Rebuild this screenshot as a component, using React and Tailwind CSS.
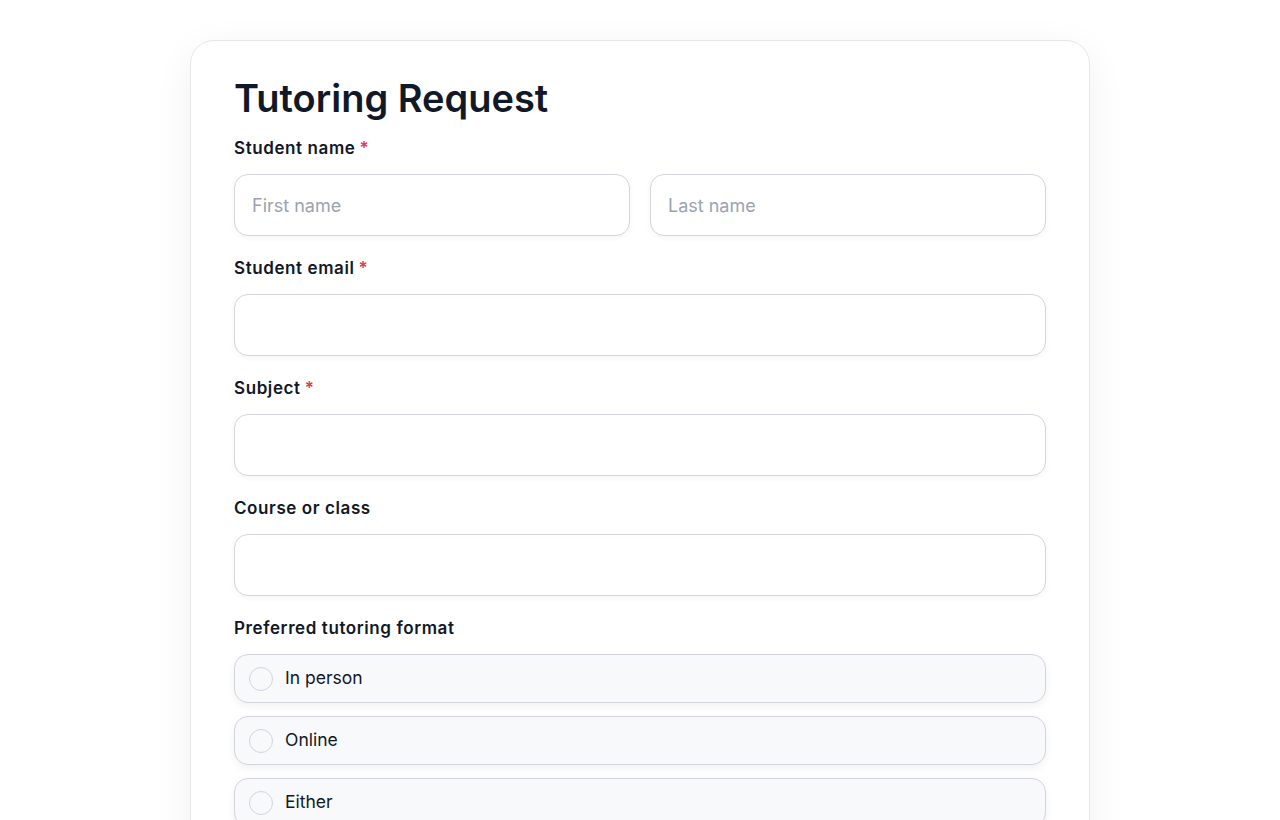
const FIELDS = [
  { label: "Course or class", required: false },
];

const OPTIONS = ["In person", "Online", "Either"];

function Label({ children, required }) {
  return (
    <label className="mb-3.5 block text-[17px] font-semibold leading-6 tracking-[0.035em] text-[#111827]">
      {children}
      {required && <span className="ml-1 text-[#e23d4b]">*</span>}
    </label>
  );
}

function TextInput({ placeholder }) {
  return (
    <input
      type="text"
      placeholder={placeholder}
      className="h-[62px] w-full rounded-[14px] border border-[#d4d4dc] bg-white px-[17px] text-[18px] text-[#111827] shadow-[0_2px_6px_rgba(17,24,39,0.04)] outline-none placeholder:text-[#9ca3af]"
    />
  );
}

export default function App() {
  return (
    <div className="min-h-screen bg-white font-['Inter','Liberation_Sans',sans-serif]">
      <div className="mx-auto mt-10 w-[900px] rounded-3xl border border-[#e5e7eb] bg-white px-[43px] pt-[37px] pb-10 shadow-[0_10px_40px_rgba(17,24,39,0.06)]">
        <h1 className="mb-[18px] text-[38px] font-semibold leading-10 text-[#111827]">
          Tutoring Request
        </h1>

        <div className="flex flex-col gap-5">
          {/* Student name */}
          <div>
            <Label required>Student name</Label>
            <div className="grid grid-cols-2 gap-5">
              <TextInput placeholder="First name" />
              <TextInput placeholder="Last name" />
            </div>
          </div>

          <div>
            <Label required>Student email</Label>
            <TextInput />
          </div>

          <div>
            <Label required>Subject</Label>
            <TextInput />
          </div>

          {FIELDS.map((f) => (
            <div key={f.label}>
              <Label required={f.required}>{f.label}</Label>
              <TextInput />
            </div>
          ))}

          {/* Format */}
          <div>
            <Label>Preferred tutoring format</Label>
            <div className="mt-px flex flex-col gap-[13px]">
              {OPTIONS.map((o) => (
                <label
                  key={o}
                  className="flex h-[49px] items-center gap-3 rounded-[14px] border border-[#d4d4dc] bg-[#f8f9fb] px-[14px] shadow-[0_3px_8px_rgba(17,24,39,0.06)]"
                >
                  <span className="h-[24px] w-[24px] rounded-full border border-[#d1d5db] bg-[#f8f9fb]" />
                  <span className="text-[17.5px] text-[#111827]">{o}</span>
                </label>
              ))}
            </div>
          </div>
        </div>
      </div>
    </div>
  );
}
